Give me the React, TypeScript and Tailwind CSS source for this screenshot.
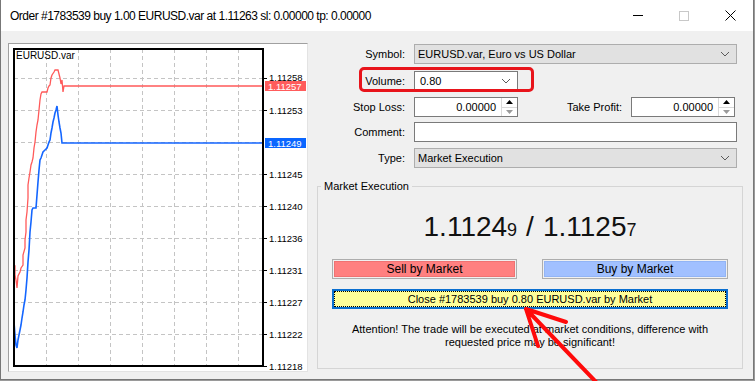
import React from "react";

const redPts =
  "13,266 15,266 15,275 16,280 17,288 18,276 20,272 21,268 23,265 23,255 25,248 25,240 26,232 26,220 27,212 28,198 28,185 29,178 30,172 31,165 32,162 33,158 34,148 35,142 36,132 37,125 38,120 39,110 40,100 41,94 42,92 47,92 48,88 49,86 50,85 51,78 52,75 54,72 55,70 58,70 59,74 60,78 61,84 62,80 63,92 64,86 65,86 263,86";
const bluePts =
  "14,322 15,335 16,345 17,348 18,340 19,335 20,330 21,325 22,318 23,312 24,305 25,300 26,290 27,278 28,262 29,250 30,232 31,222 32,210 33,208 36,208 37,195 38,182 39,170 40,160 41,158 43,152 45,150 47,148 49,142 50,140 51,133 52,128 53,122 54,118 55,113 56,110 57,106 58,115 59,122 60,128 61,133 62,143 263,143";

const gridX = [46, 78, 110, 142, 174, 206, 238];
const gridY = [78, 110, 142, 174, 206, 238, 270, 302, 334];
// price, gridline y, baseline offset
const axis: [string, number, number][] = [
  ["1.11258", 78, 2.5],
  ["1.11253", 110, 3.5],
  ["1.11245", 174, 3.5],
  ["1.11240", 206, 3.5],
  ["1.11236", 238, 3.5],
  ["1.11231", 270, 3.5],
  ["1.11227", 302, 3.5],
  ["1.11222", 334, 3.5],
  ["1.11218", 366, 3.5],
];

function Chart() {
  return (
    <div className="w-[300px] h-[329px] bg-white border-t border-l border-[#a0a0a0] border-r-[#e3e3e3] border-b-[#e3e3e3] border-r border-b">
      <svg width="298" height="327" fontFamily="'Liberation Sans', Arial, sans-serif">
        <g transform="translate(-9,-44)">
          {gridX.map((x) => (
            <line key={x} x1={x + 0.5} y1={49} x2={x + 0.5} y2={366} stroke="#c4c4c4" strokeDasharray="4 3" />
          ))}
          {gridY.map((y) => (
            <line key={y} x1={14} y1={y + 0.5} x2={263} y2={y + 0.5} stroke="#c4c4c4" strokeDasharray="4 3" />
          ))}
          <polyline points={redPts} fill="none" stroke="#ff5a5a" strokeWidth="1.3" />
          <polyline points={bluePts} fill="none" stroke="#1466ff" strokeWidth="1.6" />
          <rect x="14" y="49" width="249" height="317" fill="none" stroke="#000" strokeWidth="2" />
          <text x="16" y="59" fontSize="10" fill="#000">EURUSD.var</text>
          {axis.map(([t, y, off]) => (
            <g key={t}>
              <line x1={263} y1={y + 0.5} x2={267} y2={y + 0.5} stroke="#000" />
              <text x="269" y={y + off} fontSize="9.5" fill="#000">{t}</text>
            </g>
          ))}
          <rect x="265" y="81" width="41" height="10" fill="#ff5c5c" />
          <text x="268" y="90" fontSize="9.5" fill="#fff">1.11257</text>
          <rect x="265" y="138" width="41" height="10" fill="#0a66ff" />
          <text x="268" y="147" fontSize="9.5" fill="#fff">1.11249</text>
        </g>
      </svg>
    </div>
  );
}

function Chevron() {
  return (
    <svg width="10" height="6" viewBox="0 0 10 6">
      <path d="M1 1 L5 5 L9 1" fill="none" stroke="#5a5a5a" strokeWidth="1" />
    </svg>
  );
}

function Spinner() {
  return (
    <div className="flex flex-col w-[16px] h-full border-l border-[#d9d9d9]">
      <div className="flex-1 flex items-center justify-center border-b border-[#d9d9d9]">
        <svg width="7" height="4">
          <path d="M0 4 L3.5 0 L7 4Z" fill="#000" />
        </svg>
      </div>
      <div className="flex-1 flex items-center justify-center">
        <svg width="7" height="4">
          <path d="M0 0 L3.5 4 L7 0Z" fill="#9a9a9a" />
        </svg>
      </div>
    </div>
  );
}

function Label({ children, w = "w-[97px]" }: { children: React.ReactNode; w?: string }) {
  return <div className={`${w} shrink-0 text-right pr-[9px]`}>{children}</div>;
}

export default function App() {
  return (
    <div className="w-[755px] h-[381px] bg-[#9a9a9a] font-['Liberation_Sans',Arial,sans-serif] text-[11px] text-black">
      <div className="relative w-[754px] h-[380px] bg-[#f0f0f0] border-l border-r border-b border-[#777]">
        {/* title bar */}
        <div className="h-[31px] bg-white flex items-center">
          <div className="pl-[9px] text-[12px] tracking-[-0.5px] text-black flex-1">
            Order #1783539 buy 1.00 EURUSD.var at 1.11263 sl: 0.00000 tp: 0.00000
          </div>
          <div className="w-[46px] h-[31px] flex items-center justify-center">
            <div className="w-[10px] h-px bg-black" />
          </div>
          <div className="w-[46px] h-[31px] flex items-center justify-center">
            <div className="w-[10px] h-[10px] border border-[#c8c8c8]" />
          </div>
          <div className="w-[46px] h-[31px] flex items-center justify-center">
            <svg width="11" height="11">
              <path d="M0.5 0.5 L10.5 10.5 M10.5 0.5 L0.5 10.5" stroke="#000" strokeWidth="1" />
            </svg>
          </div>
        </div>

        {/* body */}
        <div className="flex pt-[12px] pl-[7px]">
          <Chart />

          <div className="ml-[9px] w-[426px]">
            <div className="flex items-center h-[20px] mt-px">
              <Label>Symbol:</Label>
              <div className="w-[323px] h-[20px] bg-[#e1e1e1] border border-[#adadad] flex items-center pl-[3px] pr-[6px]">
                <span className="flex-1">EURUSD.var, Euro vs US Dollar</span>
                <Chevron />
              </div>
            </div>

            <div className="flex items-center h-[20px] mt-[7px]">
              <Label>Volume:</Label>
              <div className="w-[104px] h-[20px] bg-white border border-[#7a7a7a] flex items-center pl-[5px] pr-[6px]">
                <span className="flex-1">0.80</span>
                <Chevron />
              </div>
            </div>

            <div className="flex items-center h-[20px] mt-[6px]">
              <Label>Stop Loss:</Label>
              <div className="w-[104px] h-[20px] bg-white border border-[#7a7a7a] flex items-center">
                <span className="flex-1 text-right pr-[5px]">0.00000</span>
                <Spinner />
              </div>
              <Label w="w-[113px]">Take Profit:</Label>
              <div className="w-[104px] h-[20px] bg-white border border-[#7a7a7a] flex items-center">
                <span className="flex-1 text-right pr-[5px]">0.00000</span>
                <Spinner />
              </div>
            </div>

            <div className="flex items-center h-[20px] mt-[5px]">
              <Label>Comment:</Label>
              <div className="w-[323px] h-[20px] bg-white border border-[#7a7a7a]" />
            </div>

            <div className="flex items-center h-[20px] mt-[6px]">
              <Label>Type:</Label>
              <div className="w-[323px] h-[20px] bg-[#e1e1e1] border border-[#adadad] flex items-center pl-[3px] pr-[6px]">
                <span className="flex-1">Market Execution</span>
                <Chevron />
              </div>
            </div>

            <fieldset className="mt-[12px] w-[426px] h-[189px] border border-[#d5d5d5]">
              <legend className="ml-[3px] px-[3px] leading-[13px]">Market Execution</legend>
              <div className="flex flex-col items-center">
                <div className="mt-[19px] h-[30px] flex items-baseline text-[28px] leading-[30px] text-[#111]">
                  <span>1.1124</span>
                  <span className="text-[18px]">9</span>
                  <span className="mx-[9px]">/</span>
                  <span>1.1125</span>
                  <span className="text-[18px]">7</span>
                </div>
                <div className="mt-[17px] flex gap-[25px]">
                  <div className="w-[185px] h-[20px] border border-[#adadad] p-px">
                    <div className="w-full h-full bg-[#ff8080] border border-[#f07272] flex items-center justify-center text-[12px]">
                      Sell by Market
                    </div>
                  </div>
                  <div className="w-[186px] h-[20px] border border-[#adadad] p-px">
                    <div className="w-full h-full bg-[#a1c0ff] border border-[#92b4f5] flex items-center justify-center text-[12px]">
                      Buy by Market
                    </div>
                  </div>
                </div>
                <div className="mt-[10px] w-[396px] h-[20px] border-2 border-[#0a6fd0] bg-[#ffff99]">
                  <div className="w-full h-full border border-dotted border-black flex items-center justify-center">
                    Close #1783539 buy 0.80 EURUSD.var by Market
                  </div>
                </div>
                <div className="mt-[14px] text-center leading-[13px]">
                  Attention! The trade will be executed at market conditions, difference with
                  <br />
                  requested price may be significant!
                </div>
              </div>
            </fieldset>
          </div>
        </div>

        {/* annotations */}
        <div className="absolute left-[358px] top-[67px] w-[175px] h-[25px] border-[3px] border-[#e8141b] rounded-[5px] pointer-events-none" />
        <svg className="absolute -left-px top-0 pointer-events-none" width="755" height="381">
          <path
            d="M598 384 L526 309 M526 309 L566 322 M526 309 L538 346"
            fill="none"
            stroke="#ff0a0a"
            strokeWidth="4"
            strokeLinecap="round"
          />
        </svg>
      </div>
    </div>
  );
}
